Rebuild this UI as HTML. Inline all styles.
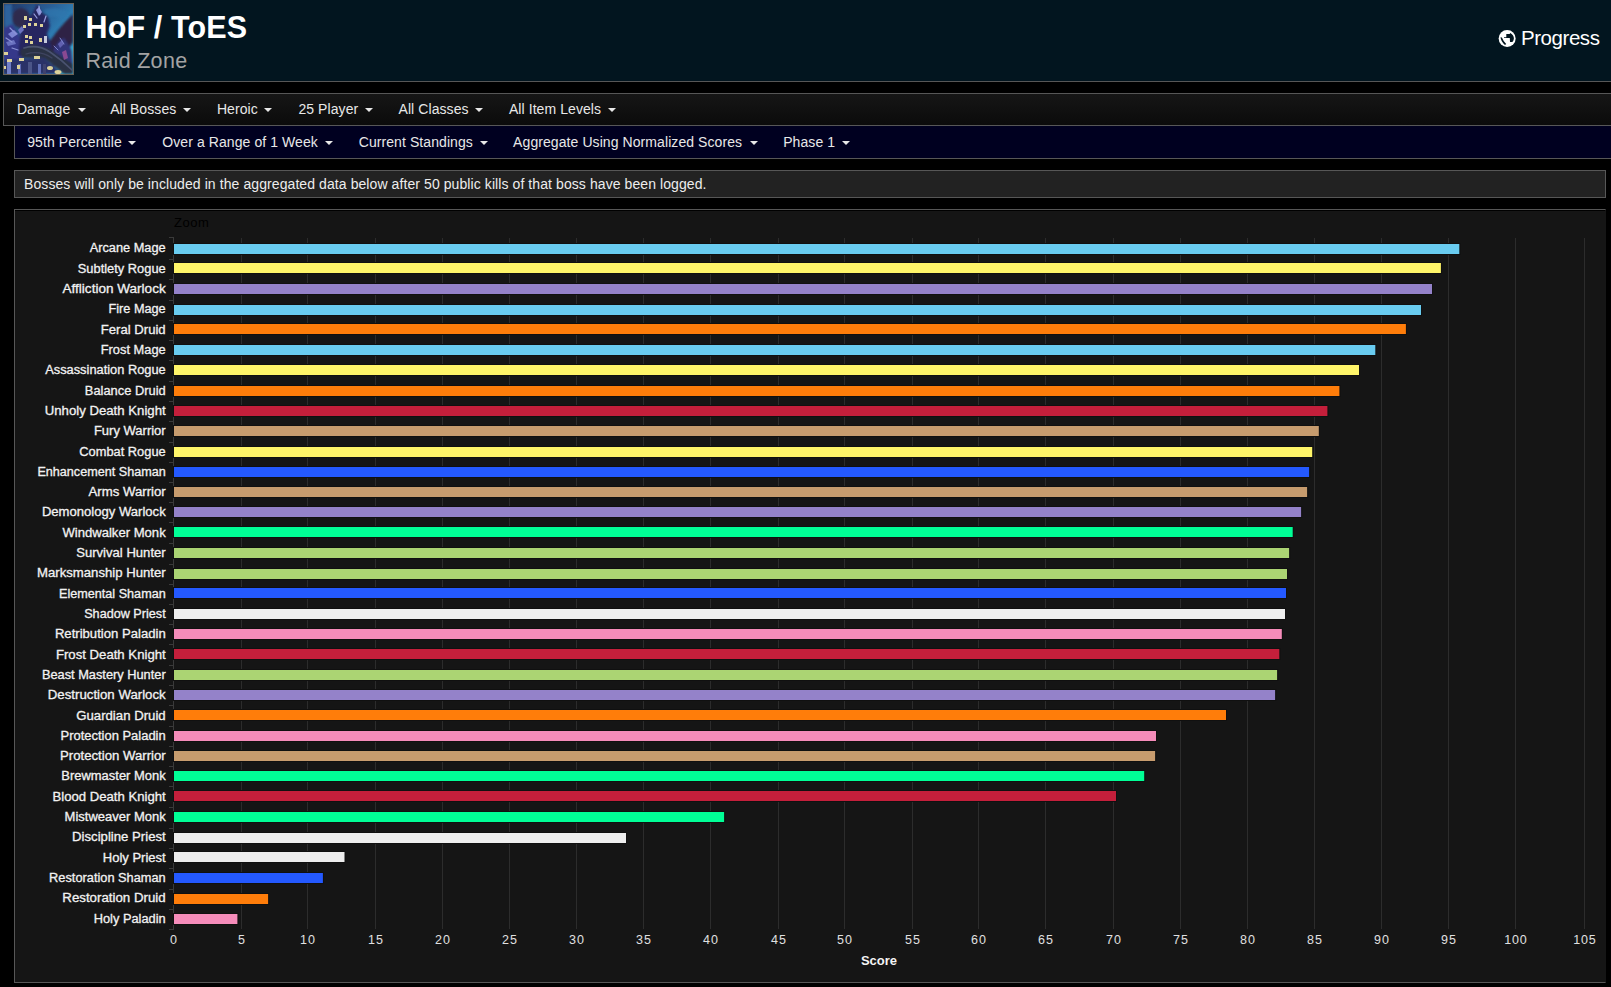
<!DOCTYPE html>
<html><head><meta charset="utf-8">
<style>
*{box-sizing:border-box;margin:0;padding:0}
html,body{width:1611px;height:987px;overflow:hidden;background:#000;font-family:"Liberation Sans",sans-serif;color:#fff}
.abs{position:absolute}
#hdr{left:0;top:0;width:1611px;height:82px;background:#02151f;border-bottom:1px solid #575757}
#icon{left:3px;top:3px;width:71px;height:72px;border:1px solid #6b6257;overflow:hidden}
#title{left:85.5px;top:8.8px;font-weight:bold;font-size:30.5px;line-height:36px;letter-spacing:0.12px;color:#fff;white-space:nowrap}
#sub{left:85.5px;top:48px;font-size:21.5px;line-height:26px;letter-spacing:0.3px;color:#a3a3a3;white-space:nowrap}
#prog{left:1521px;top:26px;font-size:20.5px;line-height:24px;letter-spacing:-0.45px;color:#fff;white-space:nowrap}
#globe{left:1498px;top:29px;width:18px;height:18px}
#nav1{left:3px;top:93px;width:1620px;height:33px;border:1px solid #575757;background:linear-gradient(#161616,#0b0b0b)}
#nav2{left:14px;top:125px;width:1620px;height:34px;border:1px solid #575757;background:#000020}
.it{position:absolute;font-size:14px;line-height:16px;color:#e8e8e8;white-space:nowrap;letter-spacing:0.08px}
.car{position:absolute;width:0;height:0;border-left:4px solid transparent;border-right:4px solid transparent;border-top:4px solid #e8e8e8}
#note{left:14px;top:170px;width:1592px;height:28px;border:1px solid #575757;background:#222}
#notet{left:24px;top:176px;font-size:14px;line-height:16px;color:#ededed;white-space:nowrap;letter-spacing:0.085px}
#chart{left:14px;top:209px;width:1592px;height:774px;border:1px solid #575757;border-right-color:#151515;background:#151515;box-shadow:inset 0 1px 0 #000}
svg text{font-family:"Liberation Sans",sans-serif}
</style></head><body>
<div id="hdr" class="abs"></div>
<div id="icon" class="abs"></div>
<svg class="abs" style="left:4px;top:4px" width="69" height="70" viewBox="0 0 69 70">
<defs>
<linearGradient id="sky" x1="0" y1="0" x2="1" y2="0.9">
<stop offset="0" stop-color="#1f3868"/><stop offset="0.4" stop-color="#2a6098"/><stop offset="0.75" stop-color="#3190c4"/><stop offset="1" stop-color="#40c6e6"/>
</linearGradient>
<filter id="bl" x="-20%" y="-20%" width="140%" height="140%"><feGaussianBlur stdDeviation="0.9"/></filter>
<filter id="bl2" x="-50%" y="-50%" width="200%" height="200%"><feGaussianBlur stdDeviation="0.6"/></filter>
</defs>
<rect width="69" height="70" fill="url(#sky)"/>
<g filter="url(#bl)">
<path d="M0 0 L8 0 Q6 20 14 36 L8 44 Q0 30 0 10Z" fill="#2e6aa6" opacity="0.8"/>
<path d="M40 6 Q52 2 64 8 L60 16 Q50 10 42 14Z" fill="#2f78ae" opacity="0.7"/>
<ellipse cx="17" cy="14" rx="9" ry="10" fill="#2e2a4e"/>
<path d="M40 46 Q52 26 69 10 L69 38 Q62 50 54 58Z" fill="#2d2444"/>
<path d="M60 40 Q66 46 69 44 L69 64 Q64 58 58 52Z" fill="#3cc6e6" opacity="0.85"/>
<path d="M48 62 L50 44 L56 36 L60 34 L64 40 L68 46 L69 62Z" fill="#33357a"/>
<path d="M0 24 L8 20 L14 30 L18 40 L18 58 L0 58Z" fill="#34388a"/>
<path d="M14 52 L16 30 L22 16 L28 10 L33 0 L37 8 L44 12 L46 22 L43 30 L48 42 L46 52Z" fill="#252860"/>
<path d="M16 46 L28 40 L44 44 L69 60 L69 70 L60 70 L40 54 L18 54Z" fill="#2b3044"/>
<path d="M0 56 L40 54 L58 70 L0 70Z" fill="#2a3068"/>
</g>
<g filter="url(#bl2)">
<path d="M4 30 L10 26 L14 30 L8 34Z" fill="#7d86d2"/>
<path d="M2 38 L10 36 L12 40 L4 42Z" fill="#6a72c0"/>
<path d="M32 6 L35 3 L38 8 L35 12Z" fill="#8a92d8"/>
<path d="M14 26 L18 22 L20 26 L16 30Z" fill="#6a72c0"/>
<path d="M54 40 L58 36 L60 40 L56 44Z" fill="#6060b0"/>
<path d="M58 48 L62 46 L64 54 L60 56Z" fill="#8a4a92"/>
<rect x="3" y="58" width="4" height="12" fill="#7080c8"/>
<rect x="14" y="60" width="3" height="10" fill="#5c68b0"/>
<rect x="24" y="58" width="4" height="12" fill="#4c5488"/>
<rect x="34" y="60" width="3" height="10" fill="#6070b8"/>
<rect x="39" y="60" width="3" height="10" fill="#3c4270"/>
</g>
<g filter="url(#bl2)" fill="none" stroke-linecap="round">
<path d="M20 44 Q34 40 46 48 Q58 56 68 66" stroke="#4a5270" stroke-width="1.6"/>
<path d="M22 50 Q36 46 48 54" stroke="#3e4460" stroke-width="1.2"/>
<path d="M35 2 L36 10 M30 10 L33 14 M42 12 L40 18" stroke="#9aa2e2" stroke-width="1.2"/>
<path d="M6 24 L12 30 M2 34 L8 38 M8 44 L14 46" stroke="#8a92d6" stroke-width="1.2"/>
<path d="M56 34 L60 40 M50 42 L54 46" stroke="#7d84cc" stroke-width="1"/>
</g>
<g fill="#dcd29a" filter="url(#bl2)">
<rect x="20" y="12" width="3" height="4"/><rect x="25" y="14" width="3" height="3"/><rect x="24" y="19" width="3" height="3"/>
<rect x="19" y="21" width="3" height="3"/><rect x="30" y="19" width="3" height="3"/><rect x="36" y="20" width="3" height="3"/>
<rect x="21" y="31" width="3" height="3"/><rect x="25" y="32" width="3" height="3"/><rect x="21" y="36" width="3" height="3"/><rect x="26" y="37" width="3" height="3"/>
<rect x="35" y="34" width="3" height="4"/><rect x="40" y="32" width="3" height="7" fill="#c4c8dc"/>
<rect x="0" y="48" width="4" height="3"/><rect x="3" y="55" width="5" height="3"/><rect x="15" y="54" width="5" height="3"/>
<rect x="30" y="52" width="6" height="3"/><rect x="0" y="62" width="2" height="3"/><rect x="13" y="61" width="3" height="4"/>
<ellipse cx="46" cy="64" rx="3" ry="2"/><ellipse cx="54" cy="68" rx="3.5" ry="2"/>
</g>
</svg>

<div id="title" class="abs">HoF / ToES</div>
<div id="sub" class="abs">Raid Zone</div>
<svg class="abs" style="left:1496px;top:28px" width="22" height="22" viewBox="0 0 22 22"><circle cx="11.15" cy="10.4" r="8.5" fill="#fff"/><path d="M10.3 6.0 L13.6 6.0 L14.4 5.1 Q17.9 7.2 17.9 10.6 Q17.9 12.6 16.4 14.0 L14.0 14.0 L13.8 10.0 L8.0 10.0 L8.0 9.3 L10.3 9.3 Z" fill="#02151f"/><path d="M4.5 9.2 Q5.0 13.8 9.0 17.0 L10.2 16.0 Q7.2 13.2 5.9 9.6 Z" fill="#02151f"/></svg>
<div id="prog" class="abs">Progress</div>

<div id="nav1" class="abs"></div>
<div id="nav2" class="abs"></div>
<div class="it" style="left:16.9px;top:101px">Damage</div><div class="car" style="left:77.5px;top:108px"></div>
<div class="it" style="left:110.2px;top:101px">All Bosses</div><div class="car" style="left:183.2px;top:108px"></div>
<div class="it" style="left:216.9px;top:101px">Heroic</div><div class="car" style="left:264.2px;top:108px"></div>
<div class="it" style="left:298.4px;top:101px">25 Player</div><div class="car" style="left:364.9px;top:108px"></div>
<div class="it" style="left:398.5px;top:101px">All Classes</div><div class="car" style="left:475.1px;top:108px"></div>
<div class="it" style="left:508.9px;top:101px">All Item Levels</div><div class="car" style="left:607.8px;top:108px"></div>
<div class="it" style="left:27.2px;top:134px">95th Percentile</div><div class="car" style="left:128.0px;top:141px"></div>
<div class="it" style="left:162.3px;top:134px">Over a Range of 1 Week</div><div class="car" style="left:324.7px;top:141px"></div>
<div class="it" style="left:358.7px;top:134px">Current Standings</div><div class="car" style="left:479.6px;top:141px"></div>
<div class="it" style="left:513.1px;top:134px">Aggregate Using Normalized Scores</div><div class="car" style="left:749.6px;top:141px"></div>
<div class="it" style="left:783.2px;top:134px">Phase 1</div><div class="car" style="left:842.1px;top:141px"></div>
<div id="note" class="abs"></div>
<div id="notet" class="abs">Bosses will only be included in the aggregated data below after 50 public kills of that boss have been logged.</div>
<div id="chart" class="abs"></div>
<svg class="abs" style="left:15px;top:210px" width="1590" height="772" viewBox="15 210 1590 772">
<text x="174" y="227" font-size="13" letter-spacing="0.5" fill="#000">Zoom</text>
<path d="M241.5 238V929 M307.5 238V929 M375.5 238V929 M442.5 238V929 M509.5 238V929 M576.5 238V929 M643.5 238V929 M710.5 238V929 M778.5 238V929 M844.5 238V929 M912.5 238V929 M978.5 238V929 M1045.5 238V929 M1113.5 238V929 M1180.5 238V929 M1247.5 238V929 M1314.5 238V929 M1381.5 238V929 M1448.5 238V929 M1515.5 238V929 M1584.5 238V929" stroke="#2c2c2c" stroke-width="1" fill="none"/>
<path d="M173.5 237V930 M169 237.5H173 M169 259.5H173 M169 279.5H173 M169 300.5H173 M169 320.5H173 M169 340.5H173 M169 360.5H173 M169 381.5H173 M169 401.5H173 M169 421.5H173 M169 442.5H173 M169 462.5H173 M169 482.5H173 M169 502.5H173 M169 522.5H173 M169 543.5H173 M169 564.5H173 M169 584.5H173 M169 604.5H173 M169 624.5H173 M169 644.5H173 M169 665.5H173 M169 685.5H173 M169 705.5H173 M169 726.5H173 M169 746.5H173 M169 766.5H173 M169 786.5H173 M169 807.5H173 M169 828.5H173 M169 848.5H173 M169 868.5H173 M169 889.5H173 M169 909.5H173 M169 929.5H173" stroke="#3a3a3a" stroke-width="1" fill="none"/>
<rect x="173" y="243" width="1287.3" height="12" fill="#101010"/>
<rect x="174" y="244" width="1285.3" height="10" fill="#69CCF0"/>
<rect x="173" y="262" width="1268.9" height="12" fill="#101010"/>
<rect x="174" y="263" width="1266.9" height="10" fill="#FFF569"/>
<rect x="173" y="283" width="1260.0" height="12" fill="#101010"/>
<rect x="174" y="284" width="1258.0" height="10" fill="#9482C9"/>
<rect x="173" y="304" width="1249.0" height="12" fill="#101010"/>
<rect x="174" y="305" width="1247.0" height="10" fill="#69CCF0"/>
<rect x="173" y="323" width="1233.9" height="12" fill="#101010"/>
<rect x="174" y="324" width="1231.9" height="10" fill="#FF7D0A"/>
<rect x="173" y="344" width="1203.3" height="12" fill="#101010"/>
<rect x="174" y="345" width="1201.3" height="10" fill="#69CCF0"/>
<rect x="173" y="364" width="1187.0" height="12" fill="#101010"/>
<rect x="174" y="365" width="1185.0" height="10" fill="#FFF569"/>
<rect x="173" y="385" width="1167.4" height="12" fill="#101010"/>
<rect x="174" y="386" width="1165.4" height="10" fill="#FF7D0A"/>
<rect x="173" y="405" width="1155.4" height="12" fill="#101010"/>
<rect x="174" y="406" width="1153.4" height="10" fill="#C41F3B"/>
<rect x="173" y="425" width="1146.8" height="12" fill="#101010"/>
<rect x="174" y="426" width="1144.8" height="10" fill="#C79C6E"/>
<rect x="173" y="446" width="1140.2" height="12" fill="#101010"/>
<rect x="174" y="447" width="1138.2" height="10" fill="#FFF569"/>
<rect x="173" y="466" width="1137.1" height="12" fill="#101010"/>
<rect x="174" y="467" width="1135.1" height="10" fill="#2459FF"/>
<rect x="173" y="486" width="1135.1" height="12" fill="#101010"/>
<rect x="174" y="487" width="1133.1" height="10" fill="#C79C6E"/>
<rect x="173" y="506" width="1129.1" height="12" fill="#101010"/>
<rect x="174" y="507" width="1127.1" height="10" fill="#9482C9"/>
<rect x="173" y="526" width="1120.7" height="12" fill="#101010"/>
<rect x="174" y="527" width="1118.7" height="10" fill="#00FF96"/>
<rect x="173" y="547" width="1117.1" height="12" fill="#101010"/>
<rect x="174" y="548" width="1115.1" height="10" fill="#ABD473"/>
<rect x="173" y="568" width="1115.0" height="12" fill="#101010"/>
<rect x="174" y="569" width="1113.0" height="10" fill="#ABD473"/>
<rect x="173" y="587" width="1114.0" height="12" fill="#101010"/>
<rect x="174" y="588" width="1112.0" height="10" fill="#2459FF"/>
<rect x="173" y="608" width="1113.0" height="12" fill="#101010"/>
<rect x="174" y="609" width="1111.0" height="10" fill="#EEEEEE"/>
<rect x="173" y="628" width="1109.8" height="12" fill="#101010"/>
<rect x="174" y="629" width="1107.8" height="10" fill="#F58CBA"/>
<rect x="173" y="648" width="1107.3" height="12" fill="#101010"/>
<rect x="174" y="649" width="1105.3" height="10" fill="#C41F3B"/>
<rect x="173" y="669" width="1105.1" height="12" fill="#101010"/>
<rect x="174" y="670" width="1103.1" height="10" fill="#ABD473"/>
<rect x="173" y="689" width="1103.1" height="12" fill="#101010"/>
<rect x="174" y="690" width="1101.1" height="10" fill="#9482C9"/>
<rect x="173" y="709" width="1054.0" height="12" fill="#101010"/>
<rect x="174" y="710" width="1052.0" height="10" fill="#FF7D0A"/>
<rect x="173" y="730" width="984.0" height="12" fill="#101010"/>
<rect x="174" y="731" width="982.0" height="10" fill="#F58CBA"/>
<rect x="173" y="750" width="983.1" height="12" fill="#101010"/>
<rect x="174" y="751" width="981.1" height="10" fill="#C79C6E"/>
<rect x="173" y="770" width="972.2" height="12" fill="#101010"/>
<rect x="174" y="771" width="970.2" height="10" fill="#00FF96"/>
<rect x="173" y="790" width="944.0" height="12" fill="#101010"/>
<rect x="174" y="791" width="942.0" height="10" fill="#C41F3B"/>
<rect x="173" y="811" width="552.1" height="12" fill="#101010"/>
<rect x="174" y="812" width="550.1" height="10" fill="#00FF96"/>
<rect x="173" y="832" width="454.0" height="12" fill="#101010"/>
<rect x="174" y="833" width="452.0" height="10" fill="#EEEEEE"/>
<rect x="173" y="851" width="172.5" height="12" fill="#101010"/>
<rect x="174" y="852" width="170.5" height="10" fill="#EEEEEE"/>
<rect x="173" y="872" width="150.9" height="12" fill="#101010"/>
<rect x="174" y="873" width="148.9" height="10" fill="#2459FF"/>
<rect x="173" y="893" width="96.1" height="12" fill="#101010"/>
<rect x="174" y="894" width="94.1" height="10" fill="#FF7D0A"/>
<rect x="173" y="913" width="65.4" height="12" fill="#101010"/>
<rect x="174" y="914" width="63.4" height="10" fill="#F58CBA"/>
<text x="165.7" y="252.4" text-anchor="end" font-size="12.5" textLength="76.0" lengthAdjust="spacingAndGlyphs" fill="#f2f2f2" stroke="#f2f2f2" stroke-width="0.3">Arcane Mage</text>
<text x="165.7" y="272.8" text-anchor="end" font-size="12.5" textLength="87.9" lengthAdjust="spacingAndGlyphs" fill="#f2f2f2" stroke="#f2f2f2" stroke-width="0.3">Subtlety Rogue</text>
<text x="165.7" y="293.1" text-anchor="end" font-size="12.5" textLength="103.2" lengthAdjust="spacingAndGlyphs" fill="#f2f2f2" stroke="#f2f2f2" stroke-width="0.3">Affliction Warlock</text>
<text x="165.7" y="313.4" text-anchor="end" font-size="12.5" textLength="57.2" lengthAdjust="spacingAndGlyphs" fill="#f2f2f2" stroke="#f2f2f2" stroke-width="0.3">Fire Mage</text>
<text x="165.7" y="333.7" text-anchor="end" font-size="12.5" textLength="65.0" lengthAdjust="spacingAndGlyphs" fill="#f2f2f2" stroke="#f2f2f2" stroke-width="0.3">Feral Druid</text>
<text x="165.7" y="354.0" text-anchor="end" font-size="12.5" textLength="65.0" lengthAdjust="spacingAndGlyphs" fill="#f2f2f2" stroke="#f2f2f2" stroke-width="0.3">Frost Mage</text>
<text x="165.7" y="374.3" text-anchor="end" font-size="12.5" textLength="120.5" lengthAdjust="spacingAndGlyphs" fill="#f2f2f2" stroke="#f2f2f2" stroke-width="0.3">Assassination Rogue</text>
<text x="165.7" y="394.6" text-anchor="end" font-size="12.5" textLength="80.9" lengthAdjust="spacingAndGlyphs" fill="#f2f2f2" stroke="#f2f2f2" stroke-width="0.3">Balance Druid</text>
<text x="165.7" y="414.9" text-anchor="end" font-size="12.5" textLength="121.0" lengthAdjust="spacingAndGlyphs" fill="#f2f2f2" stroke="#f2f2f2" stroke-width="0.3">Unholy Death Knight</text>
<text x="165.7" y="435.2" text-anchor="end" font-size="12.5" textLength="71.8" lengthAdjust="spacingAndGlyphs" fill="#f2f2f2" stroke="#f2f2f2" stroke-width="0.3">Fury Warrior</text>
<text x="165.7" y="455.5" text-anchor="end" font-size="12.5" textLength="86.4" lengthAdjust="spacingAndGlyphs" fill="#f2f2f2" stroke="#f2f2f2" stroke-width="0.3">Combat Rogue</text>
<text x="165.7" y="475.8" text-anchor="end" font-size="12.5" textLength="128.3" lengthAdjust="spacingAndGlyphs" fill="#f2f2f2" stroke="#f2f2f2" stroke-width="0.3">Enhancement Shaman</text>
<text x="165.7" y="496.1" text-anchor="end" font-size="12.5" textLength="77.2" lengthAdjust="spacingAndGlyphs" fill="#f2f2f2" stroke="#f2f2f2" stroke-width="0.3">Arms Warrior</text>
<text x="165.7" y="516.4" text-anchor="end" font-size="12.5" textLength="123.8" lengthAdjust="spacingAndGlyphs" fill="#f2f2f2" stroke="#f2f2f2" stroke-width="0.3">Demonology Warlock</text>
<text x="165.7" y="536.7" text-anchor="end" font-size="12.5" textLength="103.3" lengthAdjust="spacingAndGlyphs" fill="#f2f2f2" stroke="#f2f2f2" stroke-width="0.3">Windwalker Monk</text>
<text x="165.7" y="557.0" text-anchor="end" font-size="12.5" textLength="89.5" lengthAdjust="spacingAndGlyphs" fill="#f2f2f2" stroke="#f2f2f2" stroke-width="0.3">Survival Hunter</text>
<text x="165.7" y="577.3" text-anchor="end" font-size="12.5" textLength="128.7" lengthAdjust="spacingAndGlyphs" fill="#f2f2f2" stroke="#f2f2f2" stroke-width="0.3">Marksmanship Hunter</text>
<text x="165.7" y="597.6" text-anchor="end" font-size="12.5" textLength="106.7" lengthAdjust="spacingAndGlyphs" fill="#f2f2f2" stroke="#f2f2f2" stroke-width="0.3">Elemental Shaman</text>
<text x="165.7" y="617.9" text-anchor="end" font-size="12.5" textLength="81.5" lengthAdjust="spacingAndGlyphs" fill="#f2f2f2" stroke="#f2f2f2" stroke-width="0.3">Shadow Priest</text>
<text x="165.7" y="638.2" text-anchor="end" font-size="12.5" textLength="110.8" lengthAdjust="spacingAndGlyphs" fill="#f2f2f2" stroke="#f2f2f2" stroke-width="0.3">Retribution Paladin</text>
<text x="165.7" y="658.5" text-anchor="end" font-size="12.5" textLength="109.8" lengthAdjust="spacingAndGlyphs" fill="#f2f2f2" stroke="#f2f2f2" stroke-width="0.3">Frost Death Knight</text>
<text x="165.7" y="678.9" text-anchor="end" font-size="12.5" textLength="123.8" lengthAdjust="spacingAndGlyphs" fill="#f2f2f2" stroke="#f2f2f2" stroke-width="0.3">Beast Mastery Hunter</text>
<text x="165.7" y="699.2" text-anchor="end" font-size="12.5" textLength="117.9" lengthAdjust="spacingAndGlyphs" fill="#f2f2f2" stroke="#f2f2f2" stroke-width="0.3">Destruction Warlock</text>
<text x="165.7" y="719.5" text-anchor="end" font-size="12.5" textLength="89.5" lengthAdjust="spacingAndGlyphs" fill="#f2f2f2" stroke="#f2f2f2" stroke-width="0.3">Guardian Druid</text>
<text x="165.7" y="739.8" text-anchor="end" font-size="12.5" textLength="105.2" lengthAdjust="spacingAndGlyphs" fill="#f2f2f2" stroke="#f2f2f2" stroke-width="0.3">Protection Paladin</text>
<text x="165.7" y="760.1" text-anchor="end" font-size="12.5" textLength="105.7" lengthAdjust="spacingAndGlyphs" fill="#f2f2f2" stroke="#f2f2f2" stroke-width="0.3">Protection Warrior</text>
<text x="165.7" y="780.4" text-anchor="end" font-size="12.5" textLength="104.4" lengthAdjust="spacingAndGlyphs" fill="#f2f2f2" stroke="#f2f2f2" stroke-width="0.3">Brewmaster Monk</text>
<text x="165.7" y="800.7" text-anchor="end" font-size="12.5" textLength="113.2" lengthAdjust="spacingAndGlyphs" fill="#f2f2f2" stroke="#f2f2f2" stroke-width="0.3">Blood Death Knight</text>
<text x="165.7" y="821.0" text-anchor="end" font-size="12.5" textLength="101.1" lengthAdjust="spacingAndGlyphs" fill="#f2f2f2" stroke="#f2f2f2" stroke-width="0.3">Mistweaver Monk</text>
<text x="165.7" y="841.3" text-anchor="end" font-size="12.5" textLength="93.6" lengthAdjust="spacingAndGlyphs" fill="#f2f2f2" stroke="#f2f2f2" stroke-width="0.3">Discipline Priest</text>
<text x="165.7" y="861.6" text-anchor="end" font-size="12.5" textLength="62.9" lengthAdjust="spacingAndGlyphs" fill="#f2f2f2" stroke="#f2f2f2" stroke-width="0.3">Holy Priest</text>
<text x="165.7" y="881.9" text-anchor="end" font-size="12.5" textLength="116.6" lengthAdjust="spacingAndGlyphs" fill="#f2f2f2" stroke="#f2f2f2" stroke-width="0.3">Restoration Shaman</text>
<text x="165.7" y="902.2" text-anchor="end" font-size="12.5" textLength="103.4" lengthAdjust="spacingAndGlyphs" fill="#f2f2f2" stroke="#f2f2f2" stroke-width="0.3">Restoration Druid</text>
<text x="165.7" y="922.5" text-anchor="end" font-size="12.5" textLength="72.0" lengthAdjust="spacingAndGlyphs" fill="#f2f2f2" stroke="#f2f2f2" stroke-width="0.3">Holy Paladin</text>
<text x="173.95" y="944" text-anchor="middle" font-size="12.5" letter-spacing="0.9" fill="#e0e0e0">0</text>
<text x="241.95" y="944" text-anchor="middle" font-size="12.5" letter-spacing="0.9" fill="#e0e0e0">5</text>
<text x="307.95" y="944" text-anchor="middle" font-size="12.5" letter-spacing="0.9" fill="#e0e0e0">10</text>
<text x="375.95" y="944" text-anchor="middle" font-size="12.5" letter-spacing="0.9" fill="#e0e0e0">15</text>
<text x="442.95" y="944" text-anchor="middle" font-size="12.5" letter-spacing="0.9" fill="#e0e0e0">20</text>
<text x="509.95" y="944" text-anchor="middle" font-size="12.5" letter-spacing="0.9" fill="#e0e0e0">25</text>
<text x="576.95" y="944" text-anchor="middle" font-size="12.5" letter-spacing="0.9" fill="#e0e0e0">30</text>
<text x="643.95" y="944" text-anchor="middle" font-size="12.5" letter-spacing="0.9" fill="#e0e0e0">35</text>
<text x="710.95" y="944" text-anchor="middle" font-size="12.5" letter-spacing="0.9" fill="#e0e0e0">40</text>
<text x="778.95" y="944" text-anchor="middle" font-size="12.5" letter-spacing="0.9" fill="#e0e0e0">45</text>
<text x="844.95" y="944" text-anchor="middle" font-size="12.5" letter-spacing="0.9" fill="#e0e0e0">50</text>
<text x="912.95" y="944" text-anchor="middle" font-size="12.5" letter-spacing="0.9" fill="#e0e0e0">55</text>
<text x="978.95" y="944" text-anchor="middle" font-size="12.5" letter-spacing="0.9" fill="#e0e0e0">60</text>
<text x="1045.95" y="944" text-anchor="middle" font-size="12.5" letter-spacing="0.9" fill="#e0e0e0">65</text>
<text x="1113.95" y="944" text-anchor="middle" font-size="12.5" letter-spacing="0.9" fill="#e0e0e0">70</text>
<text x="1180.95" y="944" text-anchor="middle" font-size="12.5" letter-spacing="0.9" fill="#e0e0e0">75</text>
<text x="1247.95" y="944" text-anchor="middle" font-size="12.5" letter-spacing="0.9" fill="#e0e0e0">80</text>
<text x="1314.95" y="944" text-anchor="middle" font-size="12.5" letter-spacing="0.9" fill="#e0e0e0">85</text>
<text x="1381.95" y="944" text-anchor="middle" font-size="12.5" letter-spacing="0.9" fill="#e0e0e0">90</text>
<text x="1448.95" y="944" text-anchor="middle" font-size="12.5" letter-spacing="0.9" fill="#e0e0e0">95</text>
<text x="1515.95" y="944" text-anchor="middle" font-size="12.5" letter-spacing="0.9" fill="#e0e0e0">100</text>
<text x="1584.95" y="944" text-anchor="middle" font-size="12.5" letter-spacing="0.9" fill="#e0e0e0">105</text>
<text x="879" y="964.9" text-anchor="middle" font-size="13" font-weight="bold" fill="#f4f4f4">Score</text>
</svg>
</body></html>
